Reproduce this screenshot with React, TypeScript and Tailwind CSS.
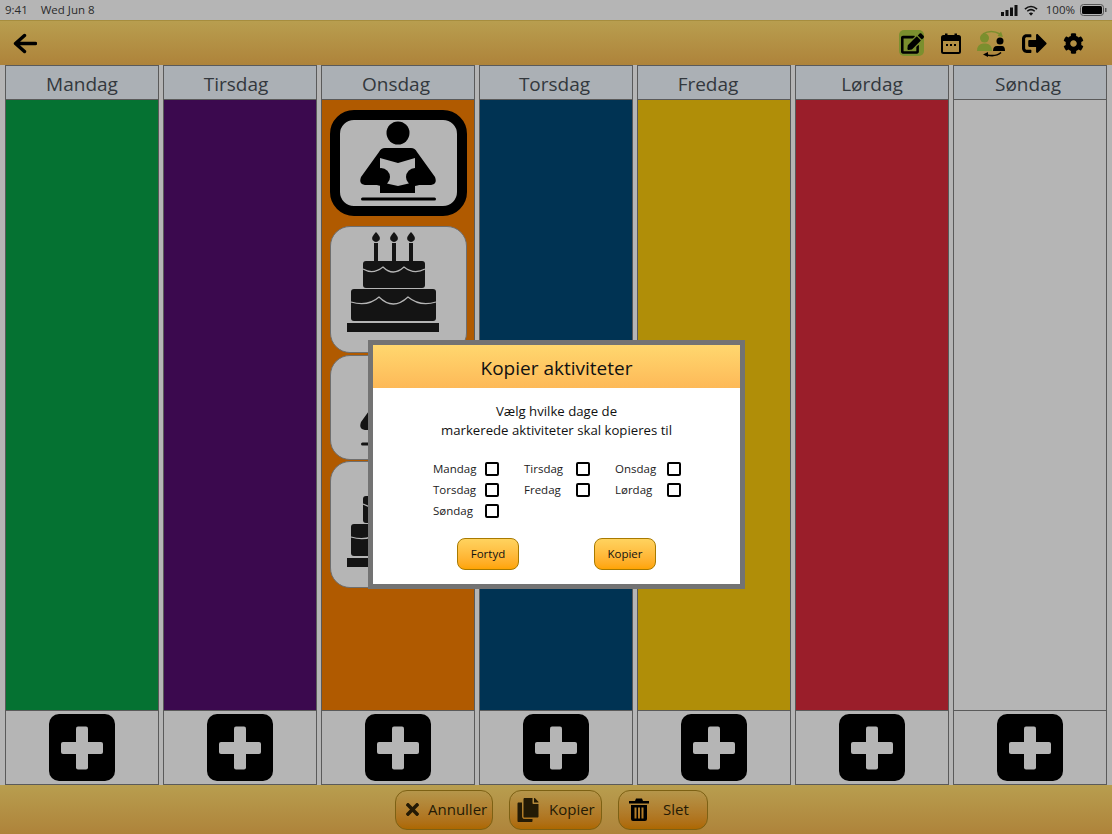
import { FaCog, FaCopy, FaEdit, FaSignOutAlt, FaTimes } from 'react-icons/fa';

const days = [
  { name: 'Mandag', color: 'bg-[#057232]', offset: '' },
  { name: 'Tirsdag', color: 'bg-[#3b094e]', offset: 'pr-2' },
  { name: 'Onsdag', color: 'bg-[#b05a00]', offset: 'pr-1' },
  { name: 'Torsdag', color: 'bg-[#003353]', offset: 'pr-[3px]' },
  { name: 'Fredag', color: 'bg-[#b08e08]', offset: 'pr-3' },
  { name: 'Lørdag', color: 'bg-[#9a1e2a]', offset: '' },
  { name: 'Søndag', color: 'bg-[#b5b5b5]', offset: 'pr-1' },
];

const copyDays = ['Mandag', 'Tirsdag', 'Onsdag', 'Torsdag', 'Fredag', 'Lørdag', 'Søndag'];

function ReadingIcon({ fill = '#000' }: { fill?: string }) {
  return (
    <svg width="137" height="106" viewBox="0 0 137 106" className="absolute left-0 top-0">
      <circle cx="68" cy="23" r="11.5" fill={fill} />
      <path d="M55 38 H81 Q85 38 87 42 L105 67 Q108 75 99 75 H85 V83 H50 V75 H37 Q28 75 31 67 L49 42 Q51 38 55 38 Z" fill={fill} />
      <path d="M50 48 L68 53 L85 48 V72 L68 76 L50 72 Z" fill="#b5b5b5" />
      <circle cx="51" cy="67" r="9" fill={fill} />
      <circle cx="85" cy="67" r="9" fill={fill} />
      <rect x="31" y="87.5" width="75" height="3" rx="1.5" fill={fill} />
    </svg>
  );
}

function CakeIcon() {
  return (
    <svg width="137" height="126" viewBox="0 0 137 126" className="absolute left-0 top-0">
      {[46, 64, 81].map((x) => (
        <g key={x} fill="#141414">
          <rect x={x - 2} y="17" width="4" height="19" />
          <path d={`M${x} 6 Q${x + 5} 11 ${x + 3.5} 14 Q${x} 18 ${x - 3.5} 14 Q${x - 5} 11 ${x} 6 Z`} />
        </g>
      ))}
      <rect x="33" y="35" width="62" height="27" rx="3" fill="#141414" />
      <rect x="21" y="63" width="85" height="32" rx="3" fill="#141414" />
      <rect x="17" y="97" width="92" height="9" fill="#141414" />
      <path d="M33 43 Q43 49 53 41 Q63 51 74 41 Q84 49 95 43" fill="none" stroke="#b5b5b5" strokeWidth="1.2" />
      <path d="M21 76 Q38 81 49 71 Q63 85 78 71 Q90 81 106 76" fill="none" stroke="#b5b5b5" strokeWidth="1.2" />
    </svg>
  );
}

function PlusButton() {
  return (
    <div className="flex h-[67px] w-[66px] items-center justify-center rounded-[10px] bg-black">
      <svg width="44" height="44" viewBox="0 0 44 44" fill="#b5b5b5">
        <rect x="16" y="0.5" width="12" height="43" rx="2" />
        <rect x="1" y="16" width="42" height="12" rx="2" />
      </svg>
    </div>
  );
}

function ActionButton({ icon, label, width }: { icon: React.ReactNode; label: string; width: string }) {
  return (
    <button className={`flex h-10 items-center rounded-xl border border-[#7d6114] bg-linear-to-b from-[#b5964a] to-[#ad6800] text-[15px] text-[#241a05] ${width}`}>
      {icon}
      <span>{label}</span>
    </button>
  );
}

function DialogButton({ label }: { label: string }) {
  return (
    <button className="h-8 w-[62px] rounded-lg border border-[#a87a00] bg-linear-to-b from-[#ffd35e] to-[#ffa400] text-[11.5px] text-[#111]">
      {label}
    </button>
  );
}

export default function App() {
  return (
    <div className="relative h-[834px] w-[1112px] overflow-hidden bg-[#b5b5b5] font-['Open_Sans',sans-serif]">
      {/* Status bar */}
      <div className="flex h-5 items-center justify-between pl-[5px] pr-[5px] text-[11.5px] text-[#2a2a2a]">
        <div className="flex gap-[13px]">
          <span>9:41</span>
          <span>Wed Jun 8</span>
        </div>
        <div className="flex items-center">
          <svg width="17" height="11" viewBox="0 0 17 11" fill="#111">
            <rect x="0" y="7" width="3" height="4" />
            <rect x="4.5" y="5" width="3" height="6" />
            <rect x="9" y="2.5" width="3" height="8.5" />
            <rect x="13.5" y="0" width="3" height="11" />
          </svg>
          <svg width="14" height="11" viewBox="0 0 15 11" fill="none" stroke="#111" strokeWidth="1.7" className="ml-[6px]">
            <path d="M1 4 Q7.5 -1.5 14 4" />
            <path d="M3.5 6.3 Q7.5 2.8 11.5 6.3" />
            <path d="M7.5 11 L5.2 8.5 Q7.5 6.8 9.8 8.5 Z" fill="#111" stroke="none" />
          </svg>
          <span className="ml-[8px]">100%</span>
          <svg width="27" height="12" viewBox="0 0 27 12" className="ml-[5px]">
            <rect x="0.5" y="0.5" width="23" height="11" rx="3" fill="none" stroke="#555" />
            <rect x="2" y="2" width="20" height="8" rx="1.5" fill="#000" />
            <rect x="25" y="4" width="1.5" height="4" fill="#555" />
          </svg>
        </div>
      </div>

      {/* Toolbar */}
      <div className="flex h-[45px] items-center justify-between border-t border-[#a68d3e] bg-linear-to-b from-[#b89e4f] to-[#ae833a] pl-[13px] pr-[28px]">
        <svg width="24" height="21" viewBox="0 0 24 21" fill="none" stroke="#000" strokeWidth="3.4" strokeLinecap="round" strokeLinejoin="round">
          <path d="M4 10.5 H22.5 M11.5 2.5 L2.5 10.5 L11.5 18.5" />
        </svg>
        <div className="flex items-center">
          <div className="flex h-[26px] w-[25px] items-center justify-center rounded-[5px] bg-[#7b8f2e]">
            <FaEdit size={23} className="ml-[2px]" />
          </div>
          <svg width="20" height="21" viewBox="0 0 20 21" className="ml-[17px]">
            <rect x="1" y="3" width="18" height="17" rx="1.5" fill="none" stroke="#000" strokeWidth="2" />
            <rect x="1" y="3" width="18" height="5" fill="#000" />
            <rect x="4" y="0.5" width="2.5" height="4" fill="#000" />
            <rect x="13.5" y="0.5" width="2.5" height="4" fill="#000" />
            <rect x="5" y="11" width="2" height="2" fill="#000" />
            <rect x="9" y="11" width="2" height="2" fill="#000" />
            <rect x="13" y="11" width="2" height="2" fill="#000" />
          </svg>
          <svg width="29" height="27" viewBox="0 0 29 27" className="ml-[16px]">
            <path d="M6 4 Q14 -1 23 4" fill="none" stroke="#7b8f2e" strokeWidth="1.6" />
            <path d="M26 7 L20.5 6 L24 1.5 Z" fill="#7b8f2e" />
            <circle cx="7.5" cy="8" r="4.5" fill="#7b8f2e" />
            <path d="M0 21 Q0 14 6 13.5 H9 Q15 14 15 21 Z" fill="#7b8f2e" />
            <circle cx="23" cy="11" r="3.5" fill="#000" />
            <path d="M16 21 Q16 16 20 16 H25 Q28 16 28 21 Z" fill="#000" />
            <path d="M10 25 Q19 27 24 22.5" fill="none" stroke="#000" strokeWidth="1.6" />
            <path d="M6 24.5 L11 22 L11 27 Z" fill="#000" />
          </svg>
          <FaSignOutAlt size={25} className="ml-[16px]" />
          <FaCog size={21} className="ml-[16px]" />
        </div>
      </div>

      {/* Week columns */}
      <div className="flex h-[720px] gap-1 px-[5px]">
        {days.map((day) => (
          <div key={day.name} className="flex w-[154px] flex-col border-x border-[#5a5a5a]">
            <div className={`flex h-[35px] items-center justify-center border-y border-[#5a5a5a] bg-[#abb0b5] pt-[4px] text-[19px] text-[#33383d] ${day.offset}`}>
              {day.name}
            </div>
            <div className={`flex h-[610px] flex-col ${day.color}`}>
              {day.name === 'Onsdag' && (
                <>
                  <div className="relative ml-2 mt-[10px] h-[106px] w-[137px] rounded-[24px] border-[10px] border-black bg-[#b5b5b5]">
                    <div className="absolute -left-[10px] -top-[10px]">
                      <ReadingIcon />
                    </div>
                  </div>
                  <div className="relative ml-2 mt-[10px] h-[127px] w-[137px] rounded-[20px] border border-[#6e6e6e] bg-[#b5b5b5]">
                    <div className="absolute -left-px -top-px">
                      <CakeIcon />
                    </div>
                  </div>
                  <div className="relative ml-2 mt-[2px] h-[105px] w-[137px] rounded-[20px] border border-[#6e6e6e] bg-[#b5b5b5]">
                    <div className="absolute -left-px -top-px">
                      <ReadingIcon fill="#141414" />
                    </div>
                  </div>
                  <div className="relative ml-2 mt-[1px] h-[127px] w-[137px] rounded-[20px] border border-[#6e6e6e] bg-[#b5b5b5]">
                    <div className="absolute -left-px -top-px">
                      <CakeIcon />
                    </div>
                  </div>
                </>
              )}
            </div>
            <div className="flex h-[75px] items-center justify-center border-y border-[#5a5a5a] bg-[#b5b5b5]">
              <PlusButton />
            </div>
          </div>
        ))}
      </div>

      {/* Bottom bar */}
      <div className="flex h-[49px] items-center justify-center gap-4 bg-linear-to-b from-[#b89e4f] to-[#ae833a] pr-[9px]">
        <ActionButton
          width="w-[98px]"
          label="Annuller"
          icon={<FaTimes size={19} className="ml-[7px] mr-[6px]" />}
        />
        <ActionButton
          width="w-[93px]"
          label="Kopier"
          icon={<FaCopy size={24} className="ml-[6px] mr-[9px]" />}
        />
        <ActionButton
          width="w-[90px]"
          label="Slet"
          icon={
            <svg width="20" height="23" viewBox="0 0 20 23" className="ml-[10px] mr-[14px]">
              <path d="M7 0.5 H13 L14 3 H20 V5.5 H0 V3 H6 Z" fill="#000" />
              <path d="M2 7 H18 V21 Q18 23 16 23 H4 Q2 23 2 21 Z M5.5 9.5 V20.5 H7.5 V9.5 Z M9 9.5 V20.5 H11 V9.5 Z M12.5 9.5 V20.5 H14.5 V9.5 Z" fill="#000" fillRule="evenodd" />
            </svg>
          }
        />
      </div>

      {/* Copy dialog */}
      <div className="absolute left-[368px] top-[340px] h-[249px] w-[377px] border-[5px] border-[#737373] bg-white">
        <div className="flex h-[43px] items-center justify-center bg-linear-to-b from-[#ffd76e] to-[#fdb958] pt-1 text-[19px] text-[#111]">
          Kopier aktiviteter
        </div>
        <div className="mt-[14px] text-center text-[13.2px] leading-[19px] text-[#111]">
          <p>Vælg hvilke dage de</p>
          <p>markerede aktiviteter skal kopieres til</p>
        </div>
        <div className="ml-[60px] mt-[18px] grid grid-cols-[91px_91px_91px] auto-rows-[21px] text-[11.5px] text-[#222]">
          {copyDays.map((name) => (
            <label key={name} className="flex items-center">
              <span className="w-[52px]">{name}</span>
              <span className="h-[14px] w-[14px] rounded-[2px] border-2 border-black" />
            </label>
          ))}
        </div>
        <div className="ml-[84px] mt-[17px] flex gap-[75px]">
          <DialogButton label="Fortyd" />
          <DialogButton label="Kopier" />
        </div>
      </div>
    </div>
  );
}
